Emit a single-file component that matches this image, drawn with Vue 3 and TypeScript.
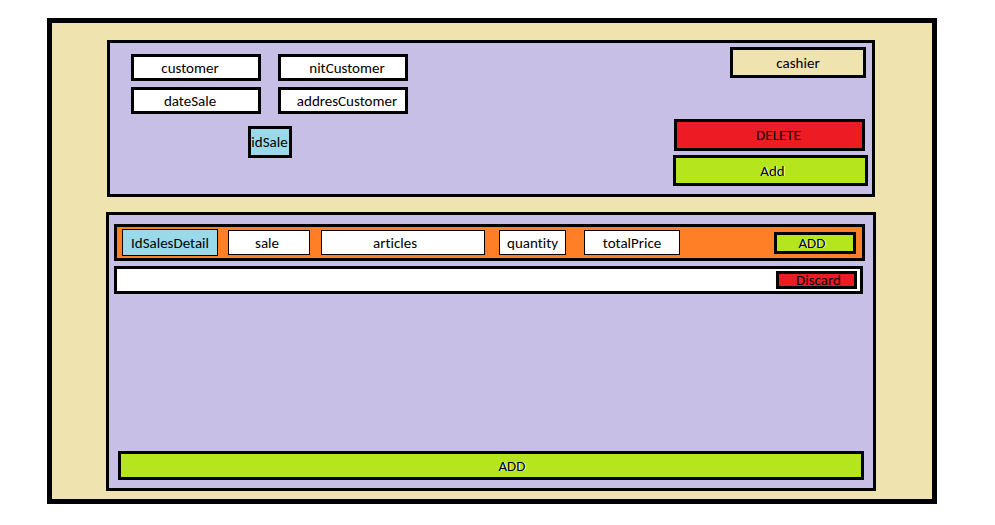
<script setup lang="ts">
import { reactive, ref } from 'vue'

interface Field {
  key: string
  value: string
}

const saleFields = reactive<Field[]>([
  { key: 'customer', value: 'customer' },
  { key: 'nit', value: 'nitCustomer' },
  { key: 'date', value: 'dateSale' },
  { key: 'address', value: 'addresCustomer' },
])

const detailFields = reactive<Field[]>([
  { key: 'id', value: 'IdSalesDetail' },
  { key: 'sale', value: 'sale' },
  { key: 'articles', value: 'articles' },
  { key: 'quantity', value: 'quantity' },
  { key: 'total', value: 'totalPrice' },
])

const idSale = ref('idSale')
const cashier = ref('cashier')
</script>

<template>
  <main class="frame">
    <form class="panel sale" @submit.prevent>
      <div class="customer-block">
        <div class="fields">
          <input
            v-for="field in saleFields"
            :key="field.key"
            v-model="field.value"
            class="box field"
            type="text"
            :aria-label="field.key"
          />
        </div>
        <input v-model="idSale" class="box id-sale" type="text" aria-label="idSale" />
      </div>
      <div class="actions">
        <input v-model="cashier" class="box cashier" type="text" aria-label="cashier" />
        <button class="box red delete" type="button">DELETE</button>
        <button class="box green add" type="submit">Add</button>
      </div>
    </form>

    <section class="panel details">
      <form class="entry" @submit.prevent>
        <input
          v-for="field in detailFields"
          :key="field.key"
          v-model="field.value"
          class="cell"
          :class="field.key"
          type="text"
          :aria-label="field.key"
        />
        <button class="box green entry-add" type="submit">ADD</button>
      </form>
      <div class="line">
        <button class="box red discard" type="button">Discard</button>
      </div>
      <button class="box green save" type="button">ADD</button>
    </section>
  </main>
</template>

<style>
body {
  background: #fff;
}
</style>

<style scoped>
* {
  box-sizing: border-box;
}

.frame {
  display: flex;
  flex-direction: column;
  gap: 15px;
  min-height: calc(100vh - 39px);
  margin: 18px 58px 21px 47px;
  padding: 17px 56px 8px 54px;
  border: 5px solid #000;
  background: #efe4b0;
  font-family: Calibri, Carlito, "Noto Sans", sans-serif;
}

input,
button {
  min-width: 0;
  margin: 0;
  padding: 0;
  border-radius: 0;
  color: #000;
  background: #fff;
  font-family: inherit;
  font-size: 15px;
  font-variant-ligatures: none;
  line-height: 18px;
  text-align: center;
}

.panel {
  display: flex;
  border: 3px solid #000;
  background: #c8bfe7;
}

.box {
  border: 3px solid #000;
}

.green {
  background: #b5e61d;
  text-shadow: 1px 0 #fff;
}

.red {
  background: #ed1c24;
}

.sale {
  justify-content: space-between;
  margin: 0 1px;
  padding: 4px 4px 8px 21px;
}

.customer-block {
  display: flex;
  flex-direction: column;
  align-items: center;
  gap: 12px;
  padding-top: 7px;
}

.fields {
  display: grid;
  grid-template-columns: 130px 130px;
  gap: 6px 17px;
}

.field {
  width: 100%;
  height: 27px;
}

.field:nth-child(odd) {
  padding-right: 12px;
}

.field:nth-child(even) {
  padding-left: 8px;
}

.id-sale {
  width: 44px;
  height: 32px;
  background: #99d9ea;
}

.actions {
  display: flex;
  flex-direction: column;
  width: 195px;
}

.cashier {
  align-self: flex-end;
  width: 136px;
  height: 31px;
  margin-right: 2px;
  background: #efe4b0;
}

.delete {
  height: 32px;
  margin: 41px 3px 4px 1px;
  padding-left: 18px;
}

.add {
  height: 31px;
  padding-left: 4px;
}

.details {
  flex: 1;
  flex-direction: column;
  padding: 9px 8px 8px 5px;
}

.entry {
  display: flex;
  align-items: center;
  height: 37px;
  padding: 0 6px 0 5px;
  border: 3px solid #000;
  background: #ff7f27;
}

.cell {
  height: 25px;
  border: 1px solid #000;
}

.cell.id {
  width: 96px;
  height: 27px;
  margin-right: 10px;
  background: #99d9ea;
}

.cell.sale {
  width: 82px;
  margin: 0 11px 0 0;
  padding: 0 4px 0 0;
}

.cell.articles {
  width: 164px;
  margin-right: 14px;
  padding-right: 16px;
}

.cell.quantity {
  width: 67px;
  margin-right: 18px;
}

.cell.total {
  width: 96px;
}

.entry-add {
  width: 82px;
  height: 22px;
  margin-left: auto;
  padding-right: 6px;
  line-height: 16px;
}

.line {
  display: flex;
  align-items: center;
  justify-content: flex-end;
  height: 28px;
  margin: 5px 2px 0 0;
  padding-right: 3px;
  border: 3px solid #000;
  background: #fff;
}

.discard {
  width: 81px;
  height: 18px;
  padding-left: 4px;
  line-height: 12px;
}

.save {
  height: 29px;
  margin: auto 1px 0 4px;
  padding-left: 42px;
}
</style>
